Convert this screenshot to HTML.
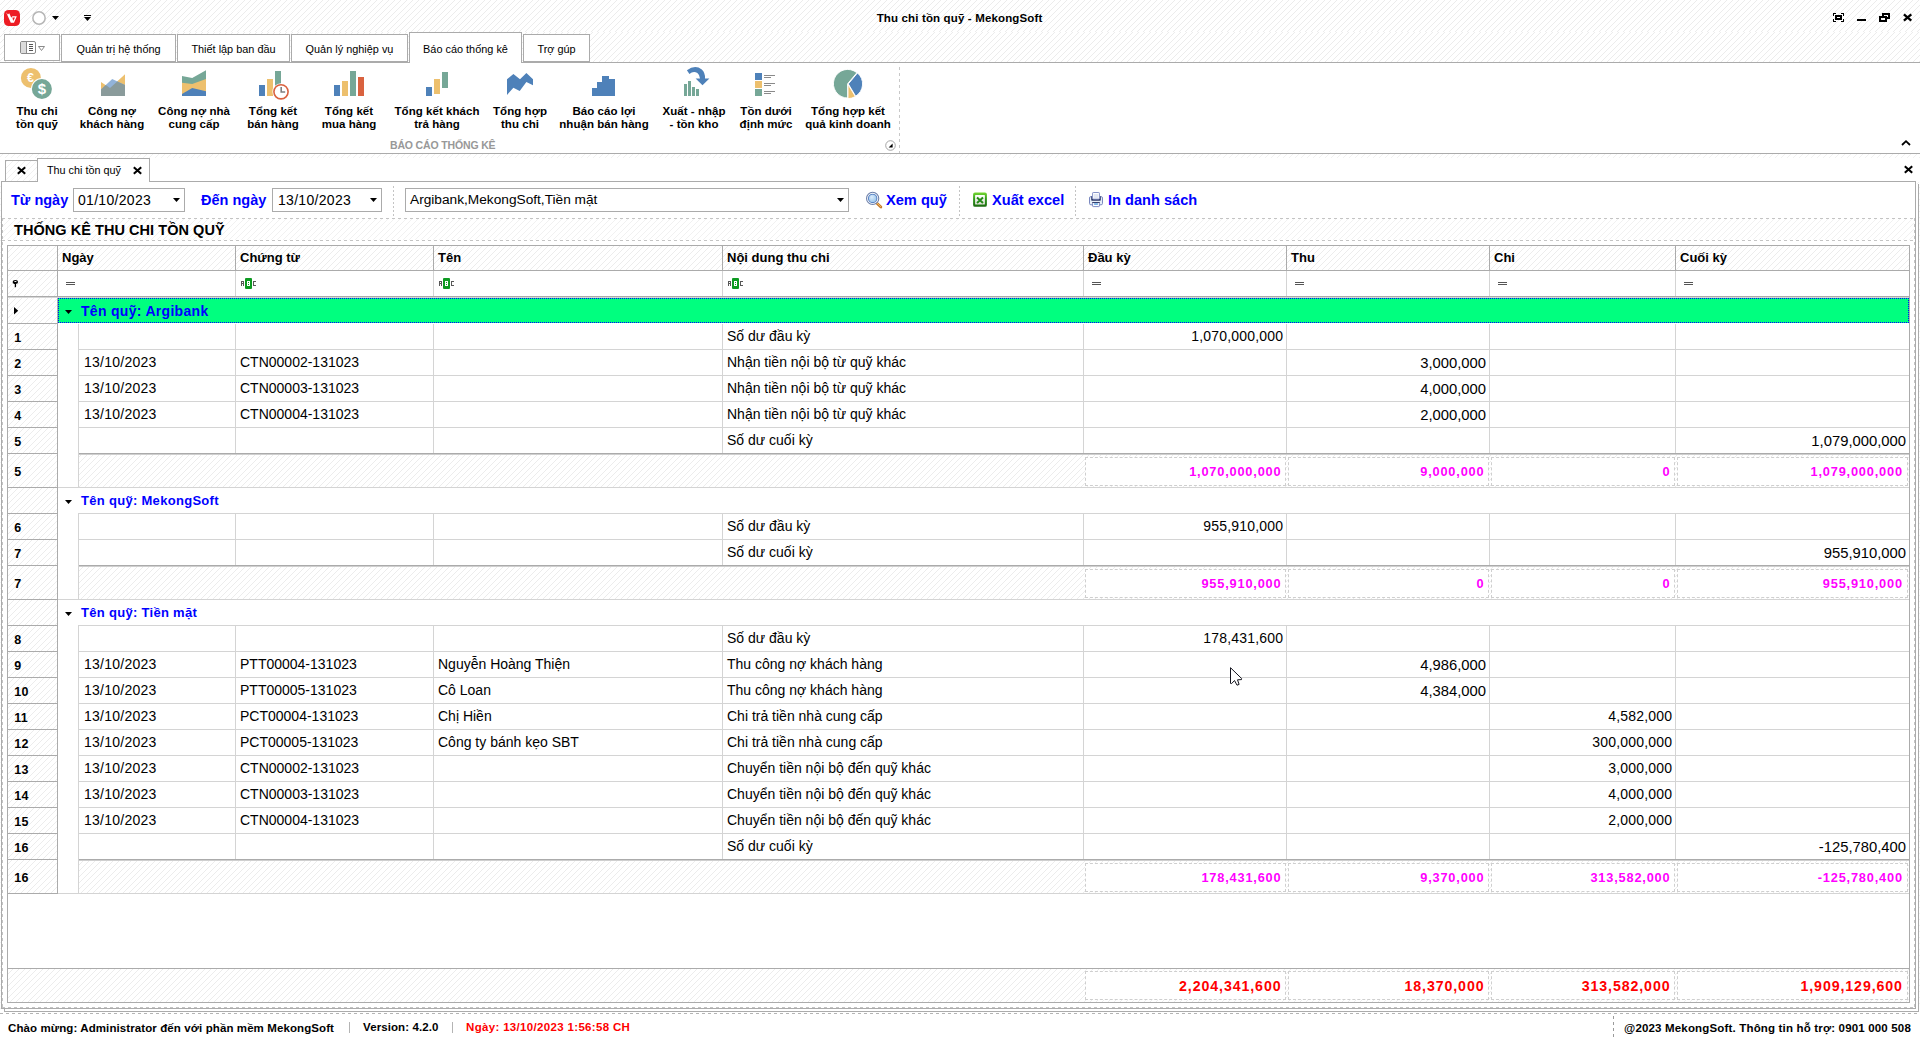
<!DOCTYPE html>
<html><head><meta charset="utf-8"><title>Thu chi tồn quỹ - MekongSoft</title>
<style>
html,body{margin:0;padding:0;}
body{width:1920px;height:1040px;overflow:hidden;background:#fff;position:relative;
 font-family:"Liberation Sans",sans-serif;font-size:11px;color:#000;}
body div, body svg{position:absolute;box-sizing:border-box;}
svg{overflow:visible}
.w{background:#fff}
</style></head><body>

<svg width="1920" height="1040" style="left:0;top:0" shape-rendering="crispEdges">
<defs>
<pattern id="h0" width="6" height="6" patternUnits="userSpaceOnUse" fill="#ececec"><rect x="4" y="0" width="1" height="1"/><rect x="3" y="1" width="1" height="1"/><rect x="2" y="2" width="1" height="1"/><rect x="1" y="3" width="1" height="1"/><rect x="0" y="4" width="1" height="1"/><rect x="5" y="5" width="1" height="1"/></pattern>
<pattern id="h1" width="6" height="6" patternUnits="userSpaceOnUse" patternTransform="translate(0,32)" fill="#ececec"><rect x="4" y="0" width="1" height="1"/><rect x="3" y="1" width="1" height="1"/><rect x="2" y="2" width="1" height="1"/><rect x="1" y="3" width="1" height="1"/><rect x="0" y="4" width="1" height="1"/><rect x="5" y="5" width="1" height="1"/></pattern>
<pattern id="hb" width="6" height="6" patternUnits="userSpaceOnUse" patternTransform="translate(0,32)" fill="#f1f1f1"><rect x="4" y="0" width="1" height="1"/><rect x="3" y="1" width="1" height="1"/><rect x="2" y="2" width="1" height="1"/><rect x="1" y="3" width="1" height="1"/><rect x="0" y="4" width="1" height="1"/><rect x="5" y="5" width="1" height="1"/></pattern>
<pattern id="hg" width="6" height="6" patternUnits="userSpaceOnUse" patternTransform="translate(1,32)" fill="#ececec"><rect x="4" y="0" width="1" height="1"/><rect x="3" y="1" width="1" height="1"/><rect x="2" y="2" width="1" height="1"/><rect x="1" y="3" width="1" height="1"/><rect x="0" y="4" width="1" height="1"/><rect x="5" y="5" width="1" height="1"/></pattern>
<pattern id="hg3" width="6" height="6" patternUnits="userSpaceOnUse" patternTransform="translate(3,32)" fill="#ececec"><rect x="4" y="0" width="1" height="1"/><rect x="3" y="1" width="1" height="1"/><rect x="2" y="2" width="1" height="1"/><rect x="1" y="3" width="1" height="1"/><rect x="0" y="4" width="1" height="1"/><rect x="5" y="5" width="1" height="1"/></pattern>
</defs>
<rect x="0" y="0" width="1920" height="32" fill="url(#h0)"/>
<rect x="0" y="32" width="1920" height="122" fill="url(#h1)"/>
<rect x="0" y="154" width="1920" height="886" fill="url(#hb)"/>
</svg>
<svg style="left:4px;top:10px;" width="16" height="16" viewBox="0 0 16 16"><rect x="0" y="0" width="16" height="16" rx="4.6" fill="#ed1c24"/><path d="M2.1 2.2 L3.9 4.5 L5.2 3.3 L7.2 7.6 L8.1 7.1 L8.1 6.3 L12.8 6.3 L10 12.8 L6.8 12.8 Z" fill="#fff"/><path d="M8.4 7.4 L11 7.4 L9.2 10.9 Z" fill="#ed1c24"/></svg>
<svg style="left:31px;top:10px;" width="16" height="16" viewBox="0 0 16 16"><circle cx="8" cy="8" r="6.15" fill="#fff" stroke="#b6b6b6" stroke-width="1.5"/></svg>
<svg style="left:52px;top:16px;" width="8" height="5" viewBox="0 0 8 5"><path d="M0 0 H7 L3.5 4 Z" fill="#000"/></svg>
<svg style="left:83px;top:15px;" width="9" height="7" viewBox="0 0 9 7"><rect x="1" y="0" width="7" height="1" fill="#000"/><path d="M1 2 H8 L4.5 6 Z" fill="#000"/></svg>
<div style="top:10.02px;line-height:16px;font-size:11.5px;color:#000;white-space:nowrap;font-weight:bold;letter-spacing:0.15px;left:659.575px;width:600px;text-align:center;">Thu chi tồn quỹ - MekongSoft</div>
<svg style="left:1833px;top:13px;shape-rendering:crispEdges" width="11" height="9" viewBox="0 0 11 9"><g fill="none" stroke="#000" stroke-width="1"><path d="M0.5 3 V0.5 H3 M8 0.5 H10.5 V3 M10.5 6 V8.5 H8 M3 8.5 H0.5 V6"/></g><rect x="3.1" y="3.1" width="4.8" height="2.8" fill="none" stroke="#000" stroke-width="1.7"/></svg>
<svg style="left:1857px;top:19px;shape-rendering:crispEdges" width="9" height="2" viewBox="0 0 9 2"><rect width="9" height="2" fill="#000"/></svg>
<svg style="left:1879px;top:13px;" width="11" height="9" viewBox="0 0 11 9"><g fill="none" stroke="#000" stroke-width="2" shape-rendering="crispEdges"><path d="M4 3 V1 H10 V5 H8"/><rect x="1" y="4" width="6" height="4"/></g></svg>
<svg style="left:1903px;top:14px;" width="9" height="7" viewBox="0 0 9 7"><path d="M0.9 0.4 L8.3 6.6 M8.3 0.4 L0.9 6.6" stroke="#000" stroke-width="2.3" fill="none"/></svg>
<div style="left:0px;top:62px;width:1920px;height:92px;background:#fff;border-top:1px solid #ababab;border-bottom:1px solid #ababab;"></div>
<div style="left:4px;top:34px;width:56px;height:27px;background:#fff;border:1px solid #ababab;"></div>
<svg style="left:20px;top:41px;" width="25" height="14" viewBox="0 0 25 14"><rect x="0.5" y="0.5" width="15" height="12" rx="1.5" fill="#fff" stroke="#8a8a8a"/><rect x="1" y="1" width="5" height="11" fill="#dcdcdc"/><path d="M6.5 0.5 V12.5" stroke="#8a8a8a"/><path d="M9 3.5 H13 M9 5.5 H13 M9 7.5 H13 M9 9.5 H13" stroke="#555"/><path d="M18.5 5.5 H24.5 L21.5 9.5 Z" fill="#fff" stroke="#8a8a8a"/></svg>
<div style="left:61px;top:34px;width:115px;height:28px;background:#fff;border:1px solid #ababab;"></div>
<div style="top:41.22px;line-height:16px;font-size:10.9px;color:#000;white-space:nowrap;left:-181.5px;width:600px;text-align:center;">Quản trị hệ thống</div>
<div style="left:177px;top:34px;width:113px;height:28px;background:#fff;border:1px solid #ababab;"></div>
<div style="top:41.22px;line-height:16px;font-size:10.9px;color:#000;white-space:nowrap;left:-66.5px;width:600px;text-align:center;">Thiết lập ban đầu</div>
<div style="left:291px;top:34px;width:117px;height:28px;background:#fff;border:1px solid #ababab;"></div>
<div style="top:41.22px;line-height:16px;font-size:10.9px;color:#000;white-space:nowrap;left:49.5px;width:600px;text-align:center;">Quản lý nghiệp vụ</div>
<div style="left:409px;top:32px;width:113px;height:31px;background:#fff;border:1px solid #ababab;border-bottom:none;"></div>
<div style="top:41.22px;line-height:16px;font-size:10.9px;color:#000;white-space:nowrap;left:165.5px;width:600px;text-align:center;">Báo cáo thống kê</div>
<div style="left:523px;top:34px;width:67px;height:28px;background:#fff;border:1px solid #ababab;"></div>
<div style="top:41.22px;line-height:16px;font-size:10.9px;color:#000;white-space:nowrap;left:256.5px;width:600px;text-align:center;">Trợ gúp</div>
<div style="left:899px;top:67px;width:1px;height:86px;background:repeating-linear-gradient(180deg,#c8c8c8 0,#c8c8c8 3px,transparent 3px,transparent 6px)"></div>
<div style="top:136.96px;line-height:16px;font-size:10.5px;color:#989898;white-space:nowrap;font-weight:bold;letter-spacing:-0.15px;left:142.72500000000002px;width:600px;text-align:center;">BÁO CÁO THỐNG KÊ</div>
<svg style="left:885px;top:140px;" width="11" height="11" viewBox="0 0 11 11"><circle cx="5.5" cy="5.5" r="4.8" fill="#fff" stroke="#9a9a9a" stroke-width="0.9"/><path d="M7.6 3.6 V7.6 H3.6 Z" fill="#000"/></svg>
<svg style="left:1901px;top:140px;" width="10" height="6" viewBox="0 0 10 6"><path d="M1 5 L5 1.2 L9 5" stroke="#000" stroke-width="1.8" fill="none"/></svg>
<svg style="left:0;top:0" width="1920" height="160" viewBox="0 0 1920 160"><circle cx="30.9" cy="77.9" r="10" fill="#edc06e"/><text x="30.4" y="82.3" font-family="Liberation Sans" font-weight="bold" font-size="12.5" fill="#fff" text-anchor="middle">€</text><circle cx="41.9" cy="89" r="10.9" fill="#fff"/><circle cx="41.9" cy="89" r="10" fill="#76a797"/><text x="41.9" y="94.4" font-family="Liberation Sans" font-weight="bold" font-size="15" fill="#fff" text-anchor="middle">$</text><polygon points="101,82 110,88 125,74.3 125,96 101,96" fill="#edc06e"/><polygon points="101,89.6 112.2,79 125,85 125,96 101,96" fill="#92b3d9"/><polygon points="101,89.6 105.7,85.1 110,88 117.26,81.4 125,85 125,96 101,96" fill="#8a9b9b"/><polygon points="182,75.9 192.2,78 206,70.2 206,96 182,96" fill="#76a797"/><polygon points="182,82.75 192.2,84 206,78.9 206,96 182,96" fill="#edc06e"/><polygon points="182,94 192.2,88 206,91.2 206,96 182,96" fill="#4e81b9"/><rect x="259" y="85" width="6" height="11" fill="#4e81b9"/><rect x="267" y="79" width="6" height="17" fill="#edc06e"/><rect x="275" y="71" width="6" height="19" fill="#76a797"/><circle cx="281" cy="91.8" r="8.6" fill="#fff"/><circle cx="281" cy="91.8" r="7.1" fill="#fff" stroke="#d9623f" stroke-width="1.6"/><path d="M281.2 87 V92 H285.2" fill="none" stroke="#808080" stroke-width="1.6"/><rect x="334" y="85" width="6" height="11" fill="#4e81b9"/><rect x="342" y="81" width="6" height="15" fill="#edc06e"/><rect x="350" y="71" width="6" height="25" fill="#76a797"/><rect x="358" y="77" width="6" height="19" fill="#d9623f"/><rect x="426" y="87" width="6" height="9" fill="#4e81b9"/><rect x="434" y="79" width="6" height="15" fill="#edc06e"/><rect x="442" y="72" width="6" height="16" fill="#76a797"/><polygon points="507,79.3 513.4,74 520,79.3 526.4,73.1 533,79.3 533,85.25 526.4,82.1 519.7,90.9 513.4,87.75 507,94.9" fill="#4e81b9"/><polygon points="592,96 592,88 597,88 597,82 602,82 602,76 609,76 609,79 615,79 615,96" fill="#4e81b9"/><rect x="684" y="84" width="3" height="12" fill="#76a797"/><rect x="688" y="81" width="3" height="15" fill="#76a797"/><rect x="692" y="87" width="3" height="9" fill="#76a797"/><rect x="696" y="89" width="3" height="7" fill="#76a797"/><path d="M686.9 70.3 Q695 64.2 701.8 69.4 Q705.4 72.8 705 78.4 L709.4 78.4 L702.5 85.3 L695.6 78.4 L700 78.4 Q700 75 697.4 72.9 Q693.2 70.6 689.4 74 Z" fill="#4e81b9"/><rect x="755" y="73" width="7" height="7" fill="#4e81b9"/><rect x="755" y="81" width="7" height="7" fill="#edc06e"/><rect x="755" y="89" width="7" height="7" fill="#76a797"/><rect x="764" y="75" width="11" height="1" fill="#8a8a8a"/><rect x="764" y="77" width="7" height="1" fill="#8a8a8a"/><rect x="764" y="83" width="11" height="1" fill="#8a8a8a"/><rect x="764" y="85" width="7" height="1" fill="#8a8a8a"/><rect x="764" y="91" width="11" height="1" fill="#8a8a8a"/><rect x="764" y="93" width="7" height="1" fill="#8a8a8a"/><path d="M847.7 83.7 L847.70 98.00 A14.3 14.3 0 1 1 856.89 72.75 Z" fill="#76a797" stroke="#fff" stroke-width="0.9" stroke-linejoin="round"/><path d="M848.3 83.9 L857.49 72.95 A14.3 14.3 0 0 1 855.67 96.16 Z" fill="#4e81b9" stroke="#fff" stroke-width="0.9" stroke-linejoin="round"/><path d="M848.0 84.3 L855.37 96.56 A14.3 14.3 0 0 1 848.00 98.60 Z" fill="#edc06e" stroke="#fff" stroke-width="0.9" stroke-linejoin="round"/></svg>
<div style="top:102.52px;line-height:16px;font-size:11.5px;color:#000;white-space:nowrap;font-weight:bold;letter-spacing:0.05px;left:-262.975px;width:600px;text-align:center;">Thu chi</div>
<div style="top:115.52px;line-height:16px;font-size:11.5px;color:#000;white-space:nowrap;font-weight:bold;letter-spacing:0.05px;left:-262.975px;width:600px;text-align:center;">tồn quỹ</div>
<div style="top:102.52px;line-height:16px;font-size:11.5px;color:#000;white-space:nowrap;font-weight:bold;letter-spacing:0.05px;left:-187.975px;width:600px;text-align:center;">Công nợ</div>
<div style="top:115.52px;line-height:16px;font-size:11.5px;color:#000;white-space:nowrap;font-weight:bold;letter-spacing:0.05px;left:-187.975px;width:600px;text-align:center;">khách hàng</div>
<div style="top:102.52px;line-height:16px;font-size:11.5px;color:#000;white-space:nowrap;font-weight:bold;letter-spacing:0.05px;left:-105.975px;width:600px;text-align:center;">Công nợ nhà</div>
<div style="top:115.52px;line-height:16px;font-size:11.5px;color:#000;white-space:nowrap;font-weight:bold;letter-spacing:0.05px;left:-105.975px;width:600px;text-align:center;">cung cấp</div>
<div style="top:102.52px;line-height:16px;font-size:11.5px;color:#000;white-space:nowrap;font-weight:bold;letter-spacing:0.05px;left:-26.975px;width:600px;text-align:center;">Tổng kết</div>
<div style="top:115.52px;line-height:16px;font-size:11.5px;color:#000;white-space:nowrap;font-weight:bold;letter-spacing:0.05px;left:-26.975px;width:600px;text-align:center;">bán hàng</div>
<div style="top:102.52px;line-height:16px;font-size:11.5px;color:#000;white-space:nowrap;font-weight:bold;letter-spacing:0.05px;left:49.025px;width:600px;text-align:center;">Tổng kết</div>
<div style="top:115.52px;line-height:16px;font-size:11.5px;color:#000;white-space:nowrap;font-weight:bold;letter-spacing:0.05px;left:49.025px;width:600px;text-align:center;">mua hàng</div>
<div style="top:102.52px;line-height:16px;font-size:11.5px;color:#000;white-space:nowrap;font-weight:bold;letter-spacing:0.05px;left:137.025px;width:600px;text-align:center;">Tổng kết khách</div>
<div style="top:115.52px;line-height:16px;font-size:11.5px;color:#000;white-space:nowrap;font-weight:bold;letter-spacing:0.05px;left:137.025px;width:600px;text-align:center;">trả hàng</div>
<div style="top:102.52px;line-height:16px;font-size:11.5px;color:#000;white-space:nowrap;font-weight:bold;letter-spacing:0.05px;left:220.025px;width:600px;text-align:center;">Tổng hợp</div>
<div style="top:115.52px;line-height:16px;font-size:11.5px;color:#000;white-space:nowrap;font-weight:bold;letter-spacing:0.05px;left:220.025px;width:600px;text-align:center;">thu chi</div>
<div style="top:102.52px;line-height:16px;font-size:11.5px;color:#000;white-space:nowrap;font-weight:bold;letter-spacing:0.05px;left:304.025px;width:600px;text-align:center;">Báo cáo lợi</div>
<div style="top:115.52px;line-height:16px;font-size:11.5px;color:#000;white-space:nowrap;font-weight:bold;letter-spacing:0.05px;left:304.025px;width:600px;text-align:center;">nhuận bán hàng</div>
<div style="top:102.52px;line-height:16px;font-size:11.5px;color:#000;white-space:nowrap;font-weight:bold;letter-spacing:0.05px;left:394.025px;width:600px;text-align:center;">Xuất - nhập</div>
<div style="top:115.52px;line-height:16px;font-size:11.5px;color:#000;white-space:nowrap;font-weight:bold;letter-spacing:0.05px;left:394.025px;width:600px;text-align:center;">- tồn kho</div>
<div style="top:102.52px;line-height:16px;font-size:11.5px;color:#000;white-space:nowrap;font-weight:bold;letter-spacing:0.05px;left:466.025px;width:600px;text-align:center;">Tồn dưới</div>
<div style="top:115.52px;line-height:16px;font-size:11.5px;color:#000;white-space:nowrap;font-weight:bold;letter-spacing:0.05px;left:466.025px;width:600px;text-align:center;">định mức</div>
<div style="top:102.52px;line-height:16px;font-size:11.5px;color:#000;white-space:nowrap;font-weight:bold;letter-spacing:0.05px;left:548.025px;width:600px;text-align:center;">Tổng hợp kết</div>
<div style="top:115.52px;line-height:16px;font-size:11.5px;color:#000;white-space:nowrap;font-weight:bold;letter-spacing:0.05px;left:548.025px;width:600px;text-align:center;">quả kinh doanh</div>
<div style="left:0px;top:158px;width:1920px;height:24px;background:#fff;"></div>
<div style="left:0px;top:1009px;width:1920px;height:5px;background:#fff;"></div>
<div style="left:4px;top:184px;width:1915px;height:828px;background:#fff;border:1px solid #ababab;border-top:none;border-left:none;"></div>
<div style="left:1px;top:181px;width:1915px;height:828px;background:#fff;border:1px solid #ababab;"></div>
<div style="left:5px;top:160px;width:33px;height:22px;border:1px solid #ababab;border-bottom:none;"></div>
<svg style="left:6px;top:161px" width="31" height="20" shape-rendering="crispEdges"><rect width="31" height="20" fill="#fff"/><rect width="31" height="20" fill="url(#hb)"/></svg>
<div style="left:37px;top:158px;width:113px;height:24px;background:#fff;border:1px solid #ababab;border-bottom:none;"></div>
<svg style="left:17px;top:167px;" width="9" height="7" viewBox="0 0 9 7"><path d="M0.8 0.3 L8.2 6.7 M8.2 0.3 L0.8 6.7" stroke="#000" stroke-width="2.1" fill="none"/></svg>
<svg style="left:133px;top:167px;" width="9" height="7" viewBox="0 0 9 7"><path d="M0.8 0.3 L8.2 6.7 M8.2 0.3 L0.8 6.7" stroke="#000" stroke-width="2.1" fill="none"/></svg>
<svg style="left:1904px;top:166px;" width="9" height="7" viewBox="0 0 9 7"><path d="M0.8 0.3 L8.2 6.7 M8.2 0.3 L0.8 6.7" stroke="#000" stroke-width="2.1" fill="none"/></svg>
<div style="top:162.26px;line-height:16px;font-size:10.8px;color:#000;white-space:nowrap;left:47px;">Thu chi tồn quỹ</div>
<div style="top:191.98px;line-height:16px;font-size:14.5px;color:#0000ff;white-space:nowrap;font-weight:bold;left:11px;">Từ ngày</div>
<div style="left:73px;top:188px;width:112px;height:24px;background:#fff;border:1px solid #ababab;"></div>
<div style="top:192.15px;line-height:16px;font-size:14px;color:#000;white-space:nowrap;letter-spacing:0.3px;left:78px;">01/10/2023</div>
<svg style="left:173px;top:198px;" width="8" height="5" viewBox="0 0 8 5"><path d="M0 0 H7 L3.5 4 Z" fill="#000"/></svg>
<div style="top:191.98px;line-height:16px;font-size:14.5px;color:#0000ff;white-space:nowrap;font-weight:bold;left:201px;">Đến ngày</div>
<div style="left:272px;top:188px;width:110px;height:24px;background:#fff;border:1px solid #ababab;"></div>
<div style="top:192.15px;line-height:16px;font-size:14px;color:#000;white-space:nowrap;letter-spacing:0.3px;left:278px;">13/10/2023</div>
<svg style="left:370px;top:198px;" width="8" height="5" viewBox="0 0 8 5"><path d="M0 0 H7 L3.5 4 Z" fill="#000"/></svg>
<div style="left:393px;top:186px;width:1px;height:2px;background:#c4c4c4"></div>
<div style="left:393px;top:190px;width:1px;height:2px;background:#c4c4c4"></div>
<div style="left:393px;top:194px;width:1px;height:2px;background:#c4c4c4"></div>
<div style="left:393px;top:198px;width:1px;height:2px;background:#c4c4c4"></div>
<div style="left:393px;top:202px;width:1px;height:2px;background:#c4c4c4"></div>
<div style="left:393px;top:206px;width:1px;height:2px;background:#c4c4c4"></div>
<div style="left:393px;top:210px;width:1px;height:2px;background:#c4c4c4"></div>
<div style="left:393px;top:214px;width:1px;height:2px;background:#c4c4c4"></div>
<div style="left:405px;top:188px;width:444px;height:24px;background:#fff;border:1px solid #ababab;"></div>
<div style="top:192.25px;line-height:16px;font-size:13.7px;color:#000;white-space:nowrap;left:410px;">Argibank,MekongSoft,Tiền mặt</div>
<svg style="left:837px;top:198px;" width="8" height="5" viewBox="0 0 8 5"><path d="M0 0 H7 L3.5 4 Z" fill="#000"/></svg>
<svg style="left:0;top:0" width="0" height="0"><defs><radialGradient id="lens" cx="0.4" cy="0.35" r="0.75"><stop offset="0" stop-color="#dcecfb"/><stop offset="1" stop-color="#8fbfe8"/></radialGradient><linearGradient id="xlg" x1="0" y1="0" x2="0" y2="1"><stop offset="0" stop-color="#76d832"/><stop offset="0.45" stop-color="#2f9a1c"/><stop offset="1" stop-color="#1c6a10"/></linearGradient><linearGradient id="xli" x1="0" y1="0" x2="0" y2="1"><stop offset="0" stop-color="#ffffff"/><stop offset="1" stop-color="#dcdfd4"/></linearGradient></defs></svg>
<svg style="left:864px;top:190px;" width="20" height="20" viewBox="0 0 20 20"><path d="M12.9 13.2 L16.9 17" stroke="#c47a2a" stroke-width="2.7" stroke-linecap="round"/><path d="M12.9 12.9 L16.7 16.6" stroke="#f2bc62" stroke-width="1" stroke-linecap="round"/><circle cx="8.65" cy="8.4" r="6.1" fill="#fff" stroke="#6e80aa" stroke-width="1.1"/><circle cx="8.65" cy="8.4" r="4.2" fill="url(#lens)" stroke="#5c86c6" stroke-width="1.1"/></svg>
<div style="top:191.94px;line-height:16px;font-size:14.6px;color:#0000ff;white-space:nowrap;font-weight:bold;left:886px;">Xem quỹ</div>
<div style="left:959px;top:186px;width:1px;height:2px;background:#c4c4c4"></div>
<div style="left:959px;top:190px;width:1px;height:2px;background:#c4c4c4"></div>
<div style="left:959px;top:194px;width:1px;height:2px;background:#c4c4c4"></div>
<div style="left:959px;top:198px;width:1px;height:2px;background:#c4c4c4"></div>
<div style="left:959px;top:202px;width:1px;height:2px;background:#c4c4c4"></div>
<div style="left:959px;top:206px;width:1px;height:2px;background:#c4c4c4"></div>
<div style="left:959px;top:210px;width:1px;height:2px;background:#c4c4c4"></div>
<div style="left:959px;top:214px;width:1px;height:2px;background:#c4c4c4"></div>
<svg style="left:973px;top:192px;" width="14" height="15" viewBox="0 0 14 15"><rect x="0.1" y="0.5" width="13.8" height="14.3" rx="1.9" fill="url(#xlg)"/><rect x="2.1" y="2.9" width="9.8" height="9.6" rx="0.6" fill="url(#xli)"/><path d="M4 5.4 L10 11 M10 5.4 L4 11" stroke="#248a18" stroke-width="2" fill="none"/></svg>
<div style="top:191.94px;line-height:16px;font-size:14.6px;color:#0000ff;white-space:nowrap;font-weight:bold;left:992px;">Xuất excel</div>
<div style="left:1075px;top:186px;width:1px;height:2px;background:#c4c4c4"></div>
<div style="left:1075px;top:190px;width:1px;height:2px;background:#c4c4c4"></div>
<div style="left:1075px;top:194px;width:1px;height:2px;background:#c4c4c4"></div>
<div style="left:1075px;top:198px;width:1px;height:2px;background:#c4c4c4"></div>
<div style="left:1075px;top:202px;width:1px;height:2px;background:#c4c4c4"></div>
<div style="left:1075px;top:206px;width:1px;height:2px;background:#c4c4c4"></div>
<div style="left:1075px;top:210px;width:1px;height:2px;background:#c4c4c4"></div>
<div style="left:1075px;top:214px;width:1px;height:2px;background:#c4c4c4"></div>
<svg style="left:1089px;top:192px;" width="14" height="15" viewBox="0 0 14 15"><rect x="0.5" y="4.6" width="13" height="8.2" rx="1.4" fill="#e6eef8" stroke="#7a88c0"/><rect x="2.2" y="4.2" width="9.6" height="4.5" rx="0.8" fill="#2c3764"/><rect x="3.6" y="0.5" width="6.8" height="6.6" rx="0.6" fill="#fff" stroke="#8592c8"/><rect x="5" y="2" width="4" height="4" fill="#e4e9f4"/><rect x="3.6" y="10.6" width="6.8" height="4" rx="0.6" fill="#fff" stroke="#7d8bc4"/><rect x="3.2" y="10.1" width="7.6" height="0.9" fill="#2c3764"/><rect x="5.1" y="11.3" width="3.8" height="1.5" fill="#5aa2e2"/></svg>
<div style="top:191.94px;line-height:16px;font-size:14.6px;color:#0000ff;white-space:nowrap;font-weight:bold;left:1108px;">In danh sách</div>
<svg style="left:2px;top:219px" width="1912" height="21" viewBox="2 219 1912 21" shape-rendering="crispEdges"><rect x="2" y="219" width="1912" height="21" fill="url(#hb)"/></svg>
<div style="left:2px;top:218px;width:1912px;height:1px;background:repeating-linear-gradient(90deg,#c4c4c4 0,#c4c4c4 3px,transparent 3px,transparent 6px)"></div>
<div style="left:2px;top:240px;width:1912px;height:1px;background:repeating-linear-gradient(90deg,#c4c4c4 0,#c4c4c4 3px,transparent 3px,transparent 6px)"></div>
<div style="top:221.98px;line-height:16px;font-size:14.5px;color:#000;white-space:nowrap;font-weight:bold;letter-spacing:0.05px;left:14px;">THỐNG KÊ THU CHI TỒN QUỸ</div>
<div style="left:7px;top:245px;width:1903px;height:758px;border:1px solid #ababab;background:#fff;"></div>
<svg style="left:8px;top:246px" width="1901" height="24" viewBox="8 246 1901 24" shape-rendering="crispEdges"><rect x="8" y="246" width="1901" height="24" fill="url(#hg)"/></svg>
<div style="left:7px;top:270px;width:1903px;height:1px;background:#ababab"></div>
<div style="left:7px;top:296px;width:1903px;height:1px;background:#ababab"></div>
<div style="left:8px;top:297px;width:1901px;height:1px;background:#d6d6d6"></div>
<div style="left:57px;top:246px;width:1px;height:25px;background:#ababab"></div>
<div style="left:57px;top:271px;width:1px;height:25px;background:#ababab"></div>
<div style="left:235px;top:246px;width:1px;height:25px;background:#ababab"></div>
<div style="left:235px;top:271px;width:1px;height:25px;background:#d4d4d4"></div>
<div style="left:433px;top:246px;width:1px;height:25px;background:#ababab"></div>
<div style="left:433px;top:271px;width:1px;height:25px;background:#d4d4d4"></div>
<div style="left:722px;top:246px;width:1px;height:25px;background:#ababab"></div>
<div style="left:722px;top:271px;width:1px;height:25px;background:#d4d4d4"></div>
<div style="left:1083px;top:246px;width:1px;height:25px;background:#ababab"></div>
<div style="left:1083px;top:271px;width:1px;height:25px;background:#d4d4d4"></div>
<div style="left:1286px;top:246px;width:1px;height:25px;background:#ababab"></div>
<div style="left:1286px;top:271px;width:1px;height:25px;background:#d4d4d4"></div>
<div style="left:1489px;top:246px;width:1px;height:25px;background:#ababab"></div>
<div style="left:1489px;top:271px;width:1px;height:25px;background:#d4d4d4"></div>
<div style="left:1675px;top:246px;width:1px;height:25px;background:#ababab"></div>
<div style="left:1675px;top:271px;width:1px;height:25px;background:#d4d4d4"></div>
<div style="top:249.50px;line-height:16px;font-size:13px;color:#000;white-space:nowrap;font-weight:bold;left:62px;">Ngày</div>
<div style="top:249.50px;line-height:16px;font-size:13px;color:#000;white-space:nowrap;font-weight:bold;left:240px;">Chứng từ</div>
<div style="top:249.50px;line-height:16px;font-size:13px;color:#000;white-space:nowrap;font-weight:bold;left:438px;">Tên</div>
<div style="top:249.50px;line-height:16px;font-size:13px;color:#000;white-space:nowrap;font-weight:bold;left:727px;">Nội dung thu chi</div>
<div style="top:249.50px;line-height:16px;font-size:13px;color:#000;white-space:nowrap;font-weight:bold;left:1088px;">Đầu kỳ</div>
<div style="top:249.50px;line-height:16px;font-size:13px;color:#000;white-space:nowrap;font-weight:bold;left:1291px;">Thu</div>
<div style="top:249.50px;line-height:16px;font-size:13px;color:#000;white-space:nowrap;font-weight:bold;left:1494px;">Chi</div>
<div style="top:249.50px;line-height:16px;font-size:13px;color:#000;white-space:nowrap;font-weight:bold;left:1680px;">Cuối kỳ</div>
<svg style="left:8px;top:271px" width="49" height="25" viewBox="8 271 49 25" shape-rendering="crispEdges"><rect x="8" y="271" width="49" height="25" fill="url(#hg)"/></svg>
<svg style="left:12px;top:280px;" width="7" height="8" viewBox="0 0 7 8"><ellipse cx="3.4" cy="2" rx="2.7" ry="2.1" fill="#000"/><ellipse cx="3.4" cy="1.5" rx="1.2" ry="0.6" fill="#fff"/><path d="M3.4 3.5 V7.2" stroke="#000" stroke-width="1.3"/></svg>
<svg style="left:66px;top:282px;shape-rendering:crispEdges" width="9" height="3" viewBox="0 0 9 3"><path d="M0 0.5 H9 M0 2.5 H9" stroke="#555" stroke-width="1"/></svg>
<svg style="left:240px;top:278px;shape-rendering:crispEdges" width="16" height="11" viewBox="0 0 16 11"><rect x="5" y="0" width="7" height="11" rx="1" fill="#0e9a22" shape-rendering="auto"/><rect x="1" y="3" width="1" height="1" fill="#585858"/><rect x="2" y="3" width="1" height="1" fill="#585858"/><rect x="3" y="3" width="1" height="1" fill="#585858"/><rect x="1" y="4" width="1" height="1" fill="#585858"/><rect x="3" y="4" width="1" height="1" fill="#585858"/><rect x="1" y="5" width="1" height="1" fill="#585858"/><rect x="2" y="5" width="1" height="1" fill="#585858"/><rect x="3" y="5" width="1" height="1" fill="#585858"/><rect x="1" y="6" width="1" height="1" fill="#585858"/><rect x="3" y="6" width="1" height="1" fill="#585858"/><rect x="1" y="7" width="1" height="1" fill="#585858"/><rect x="3" y="7" width="1" height="1" fill="#585858"/><rect x="7" y="3" width="1" height="1" fill="#ffffff"/><rect x="8" y="3" width="1" height="1" fill="#ffffff"/><rect x="9" y="3" width="1" height="1" fill="#ffffff"/><rect x="7" y="4" width="1" height="1" fill="#ffffff"/><rect x="9" y="4" width="1" height="1" fill="#ffffff"/><rect x="7" y="5" width="1" height="1" fill="#ffffff"/><rect x="8" y="5" width="1" height="1" fill="#ffffff"/><rect x="9" y="5" width="1" height="1" fill="#ffffff"/><rect x="7" y="6" width="1" height="1" fill="#ffffff"/><rect x="9" y="6" width="1" height="1" fill="#ffffff"/><rect x="7" y="7" width="1" height="1" fill="#ffffff"/><rect x="8" y="7" width="1" height="1" fill="#ffffff"/><rect x="9" y="7" width="1" height="1" fill="#ffffff"/><rect x="13" y="3" width="1" height="1" fill="#585858"/><rect x="14" y="3" width="1" height="1" fill="#585858"/><rect x="15" y="3" width="1" height="1" fill="#585858"/><rect x="13" y="4" width="1" height="1" fill="#585858"/><rect x="13" y="5" width="1" height="1" fill="#585858"/><rect x="13" y="6" width="1" height="1" fill="#585858"/><rect x="13" y="7" width="1" height="1" fill="#585858"/><rect x="14" y="7" width="1" height="1" fill="#585858"/><rect x="15" y="7" width="1" height="1" fill="#585858"/></svg>
<svg style="left:438px;top:278px;shape-rendering:crispEdges" width="16" height="11" viewBox="0 0 16 11"><rect x="5" y="0" width="7" height="11" rx="1" fill="#0e9a22" shape-rendering="auto"/><rect x="1" y="3" width="1" height="1" fill="#585858"/><rect x="2" y="3" width="1" height="1" fill="#585858"/><rect x="3" y="3" width="1" height="1" fill="#585858"/><rect x="1" y="4" width="1" height="1" fill="#585858"/><rect x="3" y="4" width="1" height="1" fill="#585858"/><rect x="1" y="5" width="1" height="1" fill="#585858"/><rect x="2" y="5" width="1" height="1" fill="#585858"/><rect x="3" y="5" width="1" height="1" fill="#585858"/><rect x="1" y="6" width="1" height="1" fill="#585858"/><rect x="3" y="6" width="1" height="1" fill="#585858"/><rect x="1" y="7" width="1" height="1" fill="#585858"/><rect x="3" y="7" width="1" height="1" fill="#585858"/><rect x="7" y="3" width="1" height="1" fill="#ffffff"/><rect x="8" y="3" width="1" height="1" fill="#ffffff"/><rect x="9" y="3" width="1" height="1" fill="#ffffff"/><rect x="7" y="4" width="1" height="1" fill="#ffffff"/><rect x="9" y="4" width="1" height="1" fill="#ffffff"/><rect x="7" y="5" width="1" height="1" fill="#ffffff"/><rect x="8" y="5" width="1" height="1" fill="#ffffff"/><rect x="9" y="5" width="1" height="1" fill="#ffffff"/><rect x="7" y="6" width="1" height="1" fill="#ffffff"/><rect x="9" y="6" width="1" height="1" fill="#ffffff"/><rect x="7" y="7" width="1" height="1" fill="#ffffff"/><rect x="8" y="7" width="1" height="1" fill="#ffffff"/><rect x="9" y="7" width="1" height="1" fill="#ffffff"/><rect x="13" y="3" width="1" height="1" fill="#585858"/><rect x="14" y="3" width="1" height="1" fill="#585858"/><rect x="15" y="3" width="1" height="1" fill="#585858"/><rect x="13" y="4" width="1" height="1" fill="#585858"/><rect x="13" y="5" width="1" height="1" fill="#585858"/><rect x="13" y="6" width="1" height="1" fill="#585858"/><rect x="13" y="7" width="1" height="1" fill="#585858"/><rect x="14" y="7" width="1" height="1" fill="#585858"/><rect x="15" y="7" width="1" height="1" fill="#585858"/></svg>
<svg style="left:727px;top:278px;shape-rendering:crispEdges" width="16" height="11" viewBox="0 0 16 11"><rect x="5" y="0" width="7" height="11" rx="1" fill="#0e9a22" shape-rendering="auto"/><rect x="1" y="3" width="1" height="1" fill="#585858"/><rect x="2" y="3" width="1" height="1" fill="#585858"/><rect x="3" y="3" width="1" height="1" fill="#585858"/><rect x="1" y="4" width="1" height="1" fill="#585858"/><rect x="3" y="4" width="1" height="1" fill="#585858"/><rect x="1" y="5" width="1" height="1" fill="#585858"/><rect x="2" y="5" width="1" height="1" fill="#585858"/><rect x="3" y="5" width="1" height="1" fill="#585858"/><rect x="1" y="6" width="1" height="1" fill="#585858"/><rect x="3" y="6" width="1" height="1" fill="#585858"/><rect x="1" y="7" width="1" height="1" fill="#585858"/><rect x="3" y="7" width="1" height="1" fill="#585858"/><rect x="7" y="3" width="1" height="1" fill="#ffffff"/><rect x="8" y="3" width="1" height="1" fill="#ffffff"/><rect x="9" y="3" width="1" height="1" fill="#ffffff"/><rect x="7" y="4" width="1" height="1" fill="#ffffff"/><rect x="9" y="4" width="1" height="1" fill="#ffffff"/><rect x="7" y="5" width="1" height="1" fill="#ffffff"/><rect x="8" y="5" width="1" height="1" fill="#ffffff"/><rect x="9" y="5" width="1" height="1" fill="#ffffff"/><rect x="7" y="6" width="1" height="1" fill="#ffffff"/><rect x="9" y="6" width="1" height="1" fill="#ffffff"/><rect x="7" y="7" width="1" height="1" fill="#ffffff"/><rect x="8" y="7" width="1" height="1" fill="#ffffff"/><rect x="9" y="7" width="1" height="1" fill="#ffffff"/><rect x="13" y="3" width="1" height="1" fill="#585858"/><rect x="14" y="3" width="1" height="1" fill="#585858"/><rect x="15" y="3" width="1" height="1" fill="#585858"/><rect x="13" y="4" width="1" height="1" fill="#585858"/><rect x="13" y="5" width="1" height="1" fill="#585858"/><rect x="13" y="6" width="1" height="1" fill="#585858"/><rect x="13" y="7" width="1" height="1" fill="#585858"/><rect x="14" y="7" width="1" height="1" fill="#585858"/><rect x="15" y="7" width="1" height="1" fill="#585858"/></svg>
<svg style="left:1092px;top:282px;shape-rendering:crispEdges" width="9" height="3" viewBox="0 0 9 3"><path d="M0 0.5 H9 M0 2.5 H9" stroke="#555" stroke-width="1"/></svg>
<svg style="left:1295px;top:282px;shape-rendering:crispEdges" width="9" height="3" viewBox="0 0 9 3"><path d="M0 0.5 H9 M0 2.5 H9" stroke="#555" stroke-width="1"/></svg>
<svg style="left:1498px;top:282px;shape-rendering:crispEdges" width="9" height="3" viewBox="0 0 9 3"><path d="M0 0.5 H9 M0 2.5 H9" stroke="#555" stroke-width="1"/></svg>
<svg style="left:1684px;top:282px;shape-rendering:crispEdges" width="9" height="3" viewBox="0 0 9 3"><path d="M0 0.5 H9 M0 2.5 H9" stroke="#555" stroke-width="1"/></svg>
<svg style="left:8px;top:298px" width="49" height="595" viewBox="8 298 49 595" shape-rendering="crispEdges"><rect x="8" y="298" width="49" height="595" fill="url(#hg)"/></svg>
<div style="left:57px;top:298px;width:1px;height:596px;background:#ababab"></div>
<svg style="left:14px;top:307px;" width="5" height="8" viewBox="0 0 5 8"><path d="M0 0 L4.2 3.75 L0 7.5 Z" fill="#000"/></svg>
<div style="left:58px;top:298px;width:1851px;height:25px;background:#00ff7f;border:1px dotted #0000ff;"></div>
<div style="top:303.15px;line-height:16px;font-size:14px;color:#0000ff;white-space:nowrap;font-weight:bold;letter-spacing:0.3px;left:81px;">Tên quỹ: Argibank</div>
<svg style="left:65px;top:310px;" width="8" height="5" viewBox="0 0 8 5"><path d="M0 0 H7 L3.5 4 Z" fill="#000"/></svg>
<div style="left:8px;top:323px;width:50px;height:1px;background:#ababab"></div>
<div style="left:8px;top:349px;width:50px;height:1px;background:#ababab"></div>
<div style="left:78px;top:349px;width:1831px;height:1px;background:#d4d4d4"></div>
<div style="top:329.67px;line-height:16px;font-size:12.5px;color:#000;white-space:nowrap;font-weight:bold;letter-spacing:0.3px;left:14.3px;">1</div>
<div style="top:328.15px;line-height:16px;font-size:14px;color:#000;white-space:nowrap;left:727px;">Số dư đầu kỳ</div>
<div style="top:328.15px;line-height:16px;font-size:14px;color:#000;white-space:nowrap;letter-spacing:0.18px;right:636.82px;text-align:right;">1,070,000,000</div>
<div style="left:8px;top:375px;width:50px;height:1px;background:#ababab"></div>
<div style="left:78px;top:375px;width:1831px;height:1px;background:#d4d4d4"></div>
<div style="top:355.67px;line-height:16px;font-size:12.5px;color:#000;white-space:nowrap;font-weight:bold;letter-spacing:0.3px;left:14.3px;">2</div>
<div style="top:354.15px;line-height:16px;font-size:14px;color:#000;white-space:nowrap;letter-spacing:0.25px;left:84px;">13/10/2023</div>
<div style="top:354.15px;line-height:16px;font-size:14px;color:#000;white-space:nowrap;left:240px;">CTN00002-131023</div>
<div style="top:354.15px;line-height:16px;font-size:14px;color:#000;white-space:nowrap;left:727px;">Nhận tiền nội bộ từ quỹ khác</div>
<div style="top:354.87px;line-height:16px;font-size:14.8px;color:#000;white-space:nowrap;right:434px;text-align:right;">3,000,000</div>
<div style="left:8px;top:401px;width:50px;height:1px;background:#ababab"></div>
<div style="left:78px;top:401px;width:1831px;height:1px;background:#d4d4d4"></div>
<div style="top:381.67px;line-height:16px;font-size:12.5px;color:#000;white-space:nowrap;font-weight:bold;letter-spacing:0.3px;left:14.3px;">3</div>
<div style="top:380.15px;line-height:16px;font-size:14px;color:#000;white-space:nowrap;letter-spacing:0.25px;left:84px;">13/10/2023</div>
<div style="top:380.15px;line-height:16px;font-size:14px;color:#000;white-space:nowrap;left:240px;">CTN00003-131023</div>
<div style="top:380.15px;line-height:16px;font-size:14px;color:#000;white-space:nowrap;left:727px;">Nhận tiền nội bộ từ quỹ khác</div>
<div style="top:380.87px;line-height:16px;font-size:14.8px;color:#000;white-space:nowrap;right:434px;text-align:right;">4,000,000</div>
<div style="left:8px;top:427px;width:50px;height:1px;background:#ababab"></div>
<div style="left:78px;top:427px;width:1831px;height:1px;background:#d4d4d4"></div>
<div style="top:407.67px;line-height:16px;font-size:12.5px;color:#000;white-space:nowrap;font-weight:bold;letter-spacing:0.3px;left:14.3px;">4</div>
<div style="top:406.15px;line-height:16px;font-size:14px;color:#000;white-space:nowrap;letter-spacing:0.25px;left:84px;">13/10/2023</div>
<div style="top:406.15px;line-height:16px;font-size:14px;color:#000;white-space:nowrap;left:240px;">CTN00004-131023</div>
<div style="top:406.15px;line-height:16px;font-size:14px;color:#000;white-space:nowrap;left:727px;">Nhận tiền nội bộ từ quỹ khác</div>
<div style="top:406.87px;line-height:16px;font-size:14.8px;color:#000;white-space:nowrap;right:434px;text-align:right;">2,000,000</div>
<div style="left:8px;top:453px;width:50px;height:1px;background:#ababab"></div>
<div style="top:433.67px;line-height:16px;font-size:12.5px;color:#000;white-space:nowrap;font-weight:bold;letter-spacing:0.3px;left:14.3px;">5</div>
<div style="top:432.15px;line-height:16px;font-size:14px;color:#000;white-space:nowrap;left:727px;">Số dư cuối kỳ</div>
<div style="top:432.87px;line-height:16px;font-size:14.8px;color:#000;white-space:nowrap;right:14px;text-align:right;">1,079,000,000</div>
<div style="left:78px;top:324px;width:1px;height:129px;background:#d4d4d4"></div>
<div style="left:235px;top:324px;width:1px;height:129px;background:#d4d4d4"></div>
<div style="left:433px;top:324px;width:1px;height:129px;background:#d4d4d4"></div>
<div style="left:722px;top:324px;width:1px;height:129px;background:#d4d4d4"></div>
<div style="left:1083px;top:324px;width:1px;height:129px;background:#d4d4d4"></div>
<div style="left:1286px;top:324px;width:1px;height:129px;background:#d4d4d4"></div>
<div style="left:1489px;top:324px;width:1px;height:129px;background:#d4d4d4"></div>
<div style="left:1675px;top:324px;width:1px;height:129px;background:#d4d4d4"></div>
<div style="left:78px;top:453px;width:1831px;height:1px;background:#ababab"></div>
<div style="left:78px;top:454px;width:1831px;height:1px;background:#cfcfcf"></div>
<svg style="left:79px;top:455px" width="1830" height="32" viewBox="79 455 1830 32" shape-rendering="crispEdges"><rect x="79" y="455" width="1830" height="32" fill="url(#hg)"/></svg>
<div style="left:78px;top:453px;width:1px;height:35px;background:#d4d4d4"></div>
<div style="left:8px;top:487px;width:50px;height:1px;background:#ababab"></div>
<div style="left:58px;top:487px;width:1851px;height:1px;background:#d4d4d4"></div>
<div style="top:464.17px;line-height:16px;font-size:12.5px;color:#000;white-space:nowrap;font-weight:bold;letter-spacing:0.3px;left:14.3px;">5</div>
<div style="left:1085px;top:457px;width:201px;height:29px;background:#fff;border:1px dashed #cfcfcf;"></div>
<div style="top:463.56px;line-height:16px;font-size:12.8px;color:#ff00ff;white-space:nowrap;font-weight:bold;letter-spacing:0.8px;right:638.6000000000001px;text-align:right;">1,070,000,000</div>
<div style="left:1288px;top:457px;width:201px;height:29px;background:#fff;border:1px dashed #cfcfcf;"></div>
<div style="top:463.56px;line-height:16px;font-size:12.8px;color:#ff00ff;white-space:nowrap;font-weight:bold;letter-spacing:0.8px;right:435.6000000000001px;text-align:right;">9,000,000</div>
<div style="left:1491px;top:457px;width:184px;height:29px;background:#fff;border:1px dashed #cfcfcf;"></div>
<div style="top:463.56px;line-height:16px;font-size:12.8px;color:#ff00ff;white-space:nowrap;font-weight:bold;letter-spacing:0.8px;right:249.60000000000008px;text-align:right;">0</div>
<div style="left:1677px;top:457px;width:231px;height:29px;background:#fff;border:1px dashed #cfcfcf;"></div>
<div style="top:463.56px;line-height:16px;font-size:12.8px;color:#ff00ff;white-space:nowrap;font-weight:bold;letter-spacing:0.8px;right:17.2px;text-align:right;">1,079,000,000</div>
<div style="top:492.80px;line-height:16px;font-size:13px;color:#0000ff;white-space:nowrap;font-weight:bold;letter-spacing:0.3px;left:81px;">Tên quỹ: MekongSoft</div>
<svg style="left:65px;top:500px;" width="8" height="5" viewBox="0 0 8 5"><path d="M0 0 H7 L3.5 4 Z" fill="#000"/></svg>
<div style="left:8px;top:513px;width:50px;height:1px;background:#ababab"></div>
<div style="left:78px;top:513px;width:1831px;height:1px;background:#d4d4d4"></div>
<div style="left:8px;top:539px;width:50px;height:1px;background:#ababab"></div>
<div style="left:78px;top:539px;width:1831px;height:1px;background:#d4d4d4"></div>
<div style="top:519.67px;line-height:16px;font-size:12.5px;color:#000;white-space:nowrap;font-weight:bold;letter-spacing:0.3px;left:14.3px;">6</div>
<div style="top:518.15px;line-height:16px;font-size:14px;color:#000;white-space:nowrap;left:727px;">Số dư đầu kỳ</div>
<div style="top:518.15px;line-height:16px;font-size:14px;color:#000;white-space:nowrap;letter-spacing:0.18px;right:636.82px;text-align:right;">955,910,000</div>
<div style="left:8px;top:565px;width:50px;height:1px;background:#ababab"></div>
<div style="top:545.67px;line-height:16px;font-size:12.5px;color:#000;white-space:nowrap;font-weight:bold;letter-spacing:0.3px;left:14.3px;">7</div>
<div style="top:544.15px;line-height:16px;font-size:14px;color:#000;white-space:nowrap;left:727px;">Số dư cuối kỳ</div>
<div style="top:544.87px;line-height:16px;font-size:14.8px;color:#000;white-space:nowrap;right:14px;text-align:right;">955,910,000</div>
<div style="left:78px;top:514px;width:1px;height:51px;background:#d4d4d4"></div>
<div style="left:235px;top:514px;width:1px;height:51px;background:#d4d4d4"></div>
<div style="left:433px;top:514px;width:1px;height:51px;background:#d4d4d4"></div>
<div style="left:722px;top:514px;width:1px;height:51px;background:#d4d4d4"></div>
<div style="left:1083px;top:514px;width:1px;height:51px;background:#d4d4d4"></div>
<div style="left:1286px;top:514px;width:1px;height:51px;background:#d4d4d4"></div>
<div style="left:1489px;top:514px;width:1px;height:51px;background:#d4d4d4"></div>
<div style="left:1675px;top:514px;width:1px;height:51px;background:#d4d4d4"></div>
<div style="left:78px;top:565px;width:1831px;height:1px;background:#ababab"></div>
<div style="left:78px;top:566px;width:1831px;height:1px;background:#cfcfcf"></div>
<svg style="left:79px;top:567px" width="1830" height="32" viewBox="79 567 1830 32" shape-rendering="crispEdges"><rect x="79" y="567" width="1830" height="32" fill="url(#hg)"/></svg>
<div style="left:78px;top:565px;width:1px;height:35px;background:#d4d4d4"></div>
<div style="left:8px;top:599px;width:50px;height:1px;background:#ababab"></div>
<div style="left:58px;top:599px;width:1851px;height:1px;background:#d4d4d4"></div>
<div style="top:576.17px;line-height:16px;font-size:12.5px;color:#000;white-space:nowrap;font-weight:bold;letter-spacing:0.3px;left:14.3px;">7</div>
<div style="left:1085px;top:569px;width:201px;height:29px;background:#fff;border:1px dashed #cfcfcf;"></div>
<div style="top:575.56px;line-height:16px;font-size:12.8px;color:#ff00ff;white-space:nowrap;font-weight:bold;letter-spacing:0.8px;right:638.6000000000001px;text-align:right;">955,910,000</div>
<div style="left:1288px;top:569px;width:201px;height:29px;background:#fff;border:1px dashed #cfcfcf;"></div>
<div style="top:575.56px;line-height:16px;font-size:12.8px;color:#ff00ff;white-space:nowrap;font-weight:bold;letter-spacing:0.8px;right:435.6000000000001px;text-align:right;">0</div>
<div style="left:1491px;top:569px;width:184px;height:29px;background:#fff;border:1px dashed #cfcfcf;"></div>
<div style="top:575.56px;line-height:16px;font-size:12.8px;color:#ff00ff;white-space:nowrap;font-weight:bold;letter-spacing:0.8px;right:249.60000000000008px;text-align:right;">0</div>
<div style="left:1677px;top:569px;width:231px;height:29px;background:#fff;border:1px dashed #cfcfcf;"></div>
<div style="top:575.56px;line-height:16px;font-size:12.8px;color:#ff00ff;white-space:nowrap;font-weight:bold;letter-spacing:0.8px;right:17.2px;text-align:right;">955,910,000</div>
<div style="top:604.80px;line-height:16px;font-size:13px;color:#0000ff;white-space:nowrap;font-weight:bold;letter-spacing:0.3px;left:81px;">Tên quỹ: Tiền mặt</div>
<svg style="left:65px;top:612px;" width="8" height="5" viewBox="0 0 8 5"><path d="M0 0 H7 L3.5 4 Z" fill="#000"/></svg>
<div style="left:8px;top:625px;width:50px;height:1px;background:#ababab"></div>
<div style="left:78px;top:625px;width:1831px;height:1px;background:#d4d4d4"></div>
<div style="left:8px;top:651px;width:50px;height:1px;background:#ababab"></div>
<div style="left:78px;top:651px;width:1831px;height:1px;background:#d4d4d4"></div>
<div style="top:631.67px;line-height:16px;font-size:12.5px;color:#000;white-space:nowrap;font-weight:bold;letter-spacing:0.3px;left:14.3px;">8</div>
<div style="top:630.15px;line-height:16px;font-size:14px;color:#000;white-space:nowrap;left:727px;">Số dư đầu kỳ</div>
<div style="top:630.15px;line-height:16px;font-size:14px;color:#000;white-space:nowrap;letter-spacing:0.18px;right:636.82px;text-align:right;">178,431,600</div>
<div style="left:8px;top:677px;width:50px;height:1px;background:#ababab"></div>
<div style="left:78px;top:677px;width:1831px;height:1px;background:#d4d4d4"></div>
<div style="top:657.67px;line-height:16px;font-size:12.5px;color:#000;white-space:nowrap;font-weight:bold;letter-spacing:0.3px;left:14.3px;">9</div>
<div style="top:656.15px;line-height:16px;font-size:14px;color:#000;white-space:nowrap;letter-spacing:0.25px;left:84px;">13/10/2023</div>
<div style="top:656.15px;line-height:16px;font-size:14px;color:#000;white-space:nowrap;left:240px;">PTT00004-131023</div>
<div style="top:656.15px;line-height:16px;font-size:14px;color:#000;white-space:nowrap;left:438px;">Nguyễn Hoàng Thiện</div>
<div style="top:656.15px;line-height:16px;font-size:14px;color:#000;white-space:nowrap;left:727px;">Thu công nợ khách hàng</div>
<div style="top:656.87px;line-height:16px;font-size:14.8px;color:#000;white-space:nowrap;right:434px;text-align:right;">4,986,000</div>
<div style="left:8px;top:703px;width:50px;height:1px;background:#ababab"></div>
<div style="left:78px;top:703px;width:1831px;height:1px;background:#d4d4d4"></div>
<div style="top:683.67px;line-height:16px;font-size:12.5px;color:#000;white-space:nowrap;font-weight:bold;letter-spacing:0.3px;left:14.3px;">10</div>
<div style="top:682.15px;line-height:16px;font-size:14px;color:#000;white-space:nowrap;letter-spacing:0.25px;left:84px;">13/10/2023</div>
<div style="top:682.15px;line-height:16px;font-size:14px;color:#000;white-space:nowrap;left:240px;">PTT00005-131023</div>
<div style="top:682.15px;line-height:16px;font-size:14px;color:#000;white-space:nowrap;left:438px;">Cô Loan</div>
<div style="top:682.15px;line-height:16px;font-size:14px;color:#000;white-space:nowrap;left:727px;">Thu công nợ khách hàng</div>
<div style="top:682.87px;line-height:16px;font-size:14.8px;color:#000;white-space:nowrap;right:434px;text-align:right;">4,384,000</div>
<div style="left:8px;top:729px;width:50px;height:1px;background:#ababab"></div>
<div style="left:78px;top:729px;width:1831px;height:1px;background:#d4d4d4"></div>
<div style="top:709.67px;line-height:16px;font-size:12.5px;color:#000;white-space:nowrap;font-weight:bold;letter-spacing:0.3px;left:14.3px;">11</div>
<div style="top:708.15px;line-height:16px;font-size:14px;color:#000;white-space:nowrap;letter-spacing:0.25px;left:84px;">13/10/2023</div>
<div style="top:708.15px;line-height:16px;font-size:14px;color:#000;white-space:nowrap;left:240px;">PCT00004-131023</div>
<div style="top:708.15px;line-height:16px;font-size:14px;color:#000;white-space:nowrap;left:438px;">Chị Hiền</div>
<div style="top:708.15px;line-height:16px;font-size:14px;color:#000;white-space:nowrap;left:727px;">Chi trả tiền nhà cung cấp</div>
<div style="top:708.15px;line-height:16px;font-size:14px;color:#000;white-space:nowrap;letter-spacing:0.18px;right:247.82px;text-align:right;">4,582,000</div>
<div style="left:8px;top:755px;width:50px;height:1px;background:#ababab"></div>
<div style="left:78px;top:755px;width:1831px;height:1px;background:#d4d4d4"></div>
<div style="top:735.67px;line-height:16px;font-size:12.5px;color:#000;white-space:nowrap;font-weight:bold;letter-spacing:0.3px;left:14.3px;">12</div>
<div style="top:734.15px;line-height:16px;font-size:14px;color:#000;white-space:nowrap;letter-spacing:0.25px;left:84px;">13/10/2023</div>
<div style="top:734.15px;line-height:16px;font-size:14px;color:#000;white-space:nowrap;left:240px;">PCT00005-131023</div>
<div style="top:734.15px;line-height:16px;font-size:14px;color:#000;white-space:nowrap;left:438px;">Công ty bánh kẹo SBT</div>
<div style="top:734.15px;line-height:16px;font-size:14px;color:#000;white-space:nowrap;left:727px;">Chi trả tiền nhà cung cấp</div>
<div style="top:734.15px;line-height:16px;font-size:14px;color:#000;white-space:nowrap;letter-spacing:0.18px;right:247.82px;text-align:right;">300,000,000</div>
<div style="left:8px;top:781px;width:50px;height:1px;background:#ababab"></div>
<div style="left:78px;top:781px;width:1831px;height:1px;background:#d4d4d4"></div>
<div style="top:761.67px;line-height:16px;font-size:12.5px;color:#000;white-space:nowrap;font-weight:bold;letter-spacing:0.3px;left:14.3px;">13</div>
<div style="top:760.15px;line-height:16px;font-size:14px;color:#000;white-space:nowrap;letter-spacing:0.25px;left:84px;">13/10/2023</div>
<div style="top:760.15px;line-height:16px;font-size:14px;color:#000;white-space:nowrap;left:240px;">CTN00002-131023</div>
<div style="top:760.15px;line-height:16px;font-size:14px;color:#000;white-space:nowrap;left:727px;">Chuyển tiền nội bộ đến quỹ khác</div>
<div style="top:760.15px;line-height:16px;font-size:14px;color:#000;white-space:nowrap;letter-spacing:0.18px;right:247.82px;text-align:right;">3,000,000</div>
<div style="left:8px;top:807px;width:50px;height:1px;background:#ababab"></div>
<div style="left:78px;top:807px;width:1831px;height:1px;background:#d4d4d4"></div>
<div style="top:787.67px;line-height:16px;font-size:12.5px;color:#000;white-space:nowrap;font-weight:bold;letter-spacing:0.3px;left:14.3px;">14</div>
<div style="top:786.15px;line-height:16px;font-size:14px;color:#000;white-space:nowrap;letter-spacing:0.25px;left:84px;">13/10/2023</div>
<div style="top:786.15px;line-height:16px;font-size:14px;color:#000;white-space:nowrap;left:240px;">CTN00003-131023</div>
<div style="top:786.15px;line-height:16px;font-size:14px;color:#000;white-space:nowrap;left:727px;">Chuyển tiền nội bộ đến quỹ khác</div>
<div style="top:786.15px;line-height:16px;font-size:14px;color:#000;white-space:nowrap;letter-spacing:0.18px;right:247.82px;text-align:right;">4,000,000</div>
<div style="left:8px;top:833px;width:50px;height:1px;background:#ababab"></div>
<div style="left:78px;top:833px;width:1831px;height:1px;background:#d4d4d4"></div>
<div style="top:813.67px;line-height:16px;font-size:12.5px;color:#000;white-space:nowrap;font-weight:bold;letter-spacing:0.3px;left:14.3px;">15</div>
<div style="top:812.15px;line-height:16px;font-size:14px;color:#000;white-space:nowrap;letter-spacing:0.25px;left:84px;">13/10/2023</div>
<div style="top:812.15px;line-height:16px;font-size:14px;color:#000;white-space:nowrap;left:240px;">CTN00004-131023</div>
<div style="top:812.15px;line-height:16px;font-size:14px;color:#000;white-space:nowrap;left:727px;">Chuyển tiền nội bộ đến quỹ khác</div>
<div style="top:812.15px;line-height:16px;font-size:14px;color:#000;white-space:nowrap;letter-spacing:0.18px;right:247.82px;text-align:right;">2,000,000</div>
<div style="left:8px;top:859px;width:50px;height:1px;background:#ababab"></div>
<div style="top:839.67px;line-height:16px;font-size:12.5px;color:#000;white-space:nowrap;font-weight:bold;letter-spacing:0.3px;left:14.3px;">16</div>
<div style="top:838.15px;line-height:16px;font-size:14px;color:#000;white-space:nowrap;left:727px;">Số dư cuối kỳ</div>
<div style="top:838.87px;line-height:16px;font-size:14.8px;color:#000;white-space:nowrap;right:14px;text-align:right;">-125,780,400</div>
<div style="left:78px;top:626px;width:1px;height:233px;background:#d4d4d4"></div>
<div style="left:235px;top:626px;width:1px;height:233px;background:#d4d4d4"></div>
<div style="left:433px;top:626px;width:1px;height:233px;background:#d4d4d4"></div>
<div style="left:722px;top:626px;width:1px;height:233px;background:#d4d4d4"></div>
<div style="left:1083px;top:626px;width:1px;height:233px;background:#d4d4d4"></div>
<div style="left:1286px;top:626px;width:1px;height:233px;background:#d4d4d4"></div>
<div style="left:1489px;top:626px;width:1px;height:233px;background:#d4d4d4"></div>
<div style="left:1675px;top:626px;width:1px;height:233px;background:#d4d4d4"></div>
<div style="left:78px;top:859px;width:1831px;height:1px;background:#ababab"></div>
<div style="left:78px;top:860px;width:1831px;height:1px;background:#cfcfcf"></div>
<svg style="left:79px;top:861px" width="1830" height="32" viewBox="79 861 1830 32" shape-rendering="crispEdges"><rect x="79" y="861" width="1830" height="32" fill="url(#hg)"/></svg>
<div style="left:78px;top:859px;width:1px;height:35px;background:#d4d4d4"></div>
<div style="left:8px;top:893px;width:50px;height:1px;background:#ababab"></div>
<div style="left:58px;top:893px;width:1851px;height:1px;background:#d4d4d4"></div>
<div style="top:870.17px;line-height:16px;font-size:12.5px;color:#000;white-space:nowrap;font-weight:bold;letter-spacing:0.3px;left:14.3px;">16</div>
<div style="left:1085px;top:863px;width:201px;height:29px;background:#fff;border:1px dashed #cfcfcf;"></div>
<div style="top:869.56px;line-height:16px;font-size:12.8px;color:#ff00ff;white-space:nowrap;font-weight:bold;letter-spacing:0.8px;right:638.6000000000001px;text-align:right;">178,431,600</div>
<div style="left:1288px;top:863px;width:201px;height:29px;background:#fff;border:1px dashed #cfcfcf;"></div>
<div style="top:869.56px;line-height:16px;font-size:12.8px;color:#ff00ff;white-space:nowrap;font-weight:bold;letter-spacing:0.8px;right:435.6000000000001px;text-align:right;">9,370,000</div>
<div style="left:1491px;top:863px;width:184px;height:29px;background:#fff;border:1px dashed #cfcfcf;"></div>
<div style="top:869.56px;line-height:16px;font-size:12.8px;color:#ff00ff;white-space:nowrap;font-weight:bold;letter-spacing:0.8px;right:249.60000000000008px;text-align:right;">313,582,000</div>
<div style="left:1677px;top:863px;width:231px;height:29px;background:#fff;border:1px dashed #cfcfcf;"></div>
<div style="top:869.56px;line-height:16px;font-size:12.8px;color:#ff00ff;white-space:nowrap;font-weight:bold;letter-spacing:0.8px;right:17.2px;text-align:right;">-125,780,400</div>
<div style="left:7px;top:968px;width:1903px;height:1px;background:#ababab"></div>
<svg style="left:8px;top:969px" width="1901" height="33" viewBox="8 969 1901 33" shape-rendering="crispEdges"><rect x="8" y="969" width="1901" height="33" fill="url(#hg3)"/></svg>
<div style="left:1085px;top:971px;width:201px;height:29px;background:#fff;border:1px dashed #cfcfcf;"></div>
<div style="top:978.08px;line-height:16px;font-size:14.2px;color:#ff0000;white-space:nowrap;font-weight:bold;letter-spacing:0.9px;right:638.5000000000001px;text-align:right;">2,204,341,600</div>
<div style="left:1288px;top:971px;width:201px;height:29px;background:#fff;border:1px dashed #cfcfcf;"></div>
<div style="top:978.08px;line-height:16px;font-size:14.2px;color:#ff0000;white-space:nowrap;font-weight:bold;letter-spacing:0.9px;right:435.5000000000001px;text-align:right;">18,370,000</div>
<div style="left:1491px;top:971px;width:184px;height:29px;background:#fff;border:1px dashed #cfcfcf;"></div>
<div style="top:978.08px;line-height:16px;font-size:14.2px;color:#ff0000;white-space:nowrap;font-weight:bold;letter-spacing:0.9px;right:249.50000000000009px;text-align:right;">313,582,000</div>
<div style="left:1677px;top:971px;width:231px;height:29px;background:#fff;border:1px dashed #cfcfcf;"></div>
<div style="top:978.08px;line-height:16px;font-size:14.2px;color:#ff0000;white-space:nowrap;font-weight:bold;letter-spacing:0.9px;right:17.1px;text-align:right;">1,909,129,600</div>
<svg style="left:1230px;top:667px;" width="13" height="20" viewBox="0 0 13 20"><path d="M0.5 0.7 L0.5 16.4 L1.6 16.6 L4.5 13.5 L7.0 18.2 L9.1 17.4 L7.5 12.8 L11.5 12.6 L11.6 11.5 Z" fill="#fff" stroke="#14141e" stroke-width="1" stroke-linejoin="round"/></svg>
<div style="left:2px;top:218px;width:1px;height:789px;background:repeating-linear-gradient(180deg,#c4c4c4 0,#c4c4c4 3px,transparent 3px,transparent 6px)"></div>
<div style="left:2px;top:1007px;width:1912px;height:1px;background:repeating-linear-gradient(90deg,#c4c4c4 0,#c4c4c4 3px,transparent 3px,transparent 6px)"></div>
<div style="left:1914px;top:218px;width:1px;height:789px;background:repeating-linear-gradient(180deg,#c4c4c4 0,#c4c4c4 3px,transparent 3px,transparent 6px)"></div>
<div style="left:0px;top:1013px;width:1920px;height:27px;background:#fff;"></div>
<div style="left:0px;top:1013px;width:1920px;height:1px;background:repeating-linear-gradient(90deg,#b4b4b4 0,#b4b4b4 3px,transparent 3px,transparent 6px)"></div>
<div style="left:4px;top:1009px;width:1px;height:3px;background:#ababab"></div>
<div style="top:1020.02px;line-height:16px;font-size:11.5px;color:#000;white-space:nowrap;font-weight:bold;letter-spacing:0.1px;left:8px;">Chào mừng: Administrator đến với phần mềm MekongSoft</div>
<div style="left:349px;top:1022px;width:1px;height:11px;background:#b4b4b4"></div>
<div style="top:1019.02px;line-height:16px;font-size:11.5px;color:#000;white-space:nowrap;font-weight:bold;letter-spacing:0.1px;left:363px;">Version: 4.2.0</div>
<div style="left:452px;top:1022px;width:1px;height:11px;background:#b4b4b4"></div>
<div style="top:1019.02px;line-height:16px;font-size:11.5px;color:#ff0000;white-space:nowrap;font-weight:bold;letter-spacing:0.33px;left:466px;">Ngày: 13/10/2023 1:56:58 CH</div>
<div style="left:1613px;top:1016px;width:1px;height:24px;background:repeating-linear-gradient(180deg,#9a9a9a 0,#9a9a9a 3px,transparent 3px,transparent 6px)"></div>
<div style="top:1020.02px;line-height:16px;font-size:11.5px;color:#000;white-space:nowrap;font-weight:bold;letter-spacing:0.17px;left:1624px;">@2023 MekongSoft. Thông tin hỗ trợ: 0901 000 508</div>
</body></html>
